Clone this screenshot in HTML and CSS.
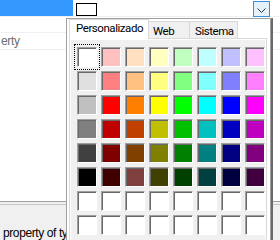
FILE: index.html
```html
<!DOCTYPE html>
<html lang="es">
<head>
    <meta charset="UTF-8">
    <title>Color</title>
    <link rel="stylesheet" href="styles.css">
</head>
<body>
    <div class="grid">
        <div class="row sel">
            <div class="name"></div>
            <div class="value">
                <span class="swatch"></span>
                <span class="drop">
                    <svg width="15" height="14" viewBox="0 0 15 14"><polyline points="3.5,6.5 7.5,10.5 11.5,6.5" fill="none" stroke="#333" stroke-width="1"/></svg>
                </span>
            </div>
        </div>
        <div class="row"><div class="name"></div></div>
        <div class="row"><div class="name dim">erty</div></div>
        <div class="fill"></div>
        <div class="split"></div>
        <div class="desc">property of type Color.</div>
    </div>

    <div class="popup">
        <div class="tabs">
            <div class="tab active">Personalizado</div>
            <div class="tab web">Web</div>
            <div class="tab sys">Sistema</div>
        </div>
        <div class="panel">
            <div class="palette" id="palette"></div>
        </div>
    </div>

    <script>
        const colors = [
            '#ffffff', '#ffc0c0', '#ffe0c0', '#ffffc0', '#c0ffc0', '#c0ffff', '#c0c0ff', '#ffc0ff',
            '#e0e0e0', '#ff8080', '#ffc080', '#ffff80', '#80ff80', '#80ffff', '#8080ff', '#ff80ff',
            '#c0c0c0', '#ff0000', '#ff8000', '#ffff00', '#00ff00', '#00ffff', '#0000ff', '#ff00ff',
            '#808080', '#c00000', '#c04000', '#c0c000', '#00c000', '#00c0c0', '#0000c0', '#c000c0',
            '#404040', '#800000', '#804000', '#808000', '#008000', '#008080', '#000080', '#800080',
            '#000000', '#400000', '#804040', '#404000', '#004000', '#004040', '#000040', '#400040'
        ];
        const palette = document.getElementById('palette');
        for (let i = 0; i < 64; i++) {
            const cell = document.createElement('div');
            cell.className = i === 0 ? 'cell focus' : 'cell';
            cell.style.background = colors[i] || '#ffffff';
            palette.appendChild(cell);
        }
    </script>
</body>
</html>
```

FILE: styles.css
```css
* { margin: 0; padding: 0; box-sizing: border-box; }
body {
    font-family: "Liberation Sans", Arial, sans-serif;
    font-size: 12px;
    color: #000;
    background: #fff;
    width: 280px;
    height: 240px;
    overflow: hidden;
    position: relative;
}
.grid {
    display: flex;
    flex-direction: column;
    height: 240px;
}
.row {
    display: flex;
    height: 17px;
    border-bottom: 1px solid #f0f0f0;
}
.row .name {
    width: 73px;
    line-height: 16px;
    white-space: nowrap;
}
.row .name.dim {
    color: #6d6d6d;
    letter-spacing: -0.3px;
    padding-left: 1px;
}
.row.sel .name {
    background: #3399ff;
}
.row .value {
    flex: 1;
    display: flex;
    align-items: flex-start;
    padding: 3px 0 0 3px;
}
.swatch {
    width: 21px;
    height: 13px;
    border: 1px solid #000;
    background: #fff;
}
.drop {
    margin-left: auto;
    margin-right: 10px;
    margin-top: -2px;
    width: 17px;
    height: 16px;
    border: 1px solid #3c8fdc;
    background: #e5f1fb;
    display: flex;
}
.fill {
    height: 158px;
}
.split {
    height: 4px;
    border-top: 1px solid #a0a0a0;
    border-bottom: 1px solid #c8c8c8;
    background: #f0f0f0;
}
.desc {
    flex: 1;
    background: #f0f0f0;
    padding: 21px 0 0 3px;
    line-height: 14px;
    letter-spacing: -0.4px;
    white-space: nowrap;
}

/* color editor drop-down */
.popup {
    position: absolute;
    left: 66px;
    top: 18px;
    width: 207px;
    height: 230px;
    background: #fff;
    border-left: 1px solid #a0a0a0;
    border-top: 1px solid #a0a0a0;
    border-right: 2px solid #696969;
    box-shadow: inset -1px 0 0 #a0a0a0;
    padding-left: 2px;
}
.tabs {
    display: flex;
    align-items: flex-end;
    height: 20px;
    margin-bottom: -1px;
    position: relative;
    z-index: 1;
}
.tab {
    height: 17px;
    margin-bottom: 1px;
    margin-left: -1px;
    border: 1px solid #d9d9d9;
    border-bottom: none;
    background: #f0f0f0;
    padding: 2px 0 0 4px;
    font-family: Roboto, "Liberation Sans", sans-serif;
    font-size: 11.5px;
    line-height: 14px;
    letter-spacing: -0.45px;
    white-space: nowrap;
}
.tab.active {
    height: 20px;
    width: 80px;
    margin: 0;
    background: #fff;
    padding: 1px 0 0 6px;
    position: relative;
    z-index: 1;
}
.tab.web { width: 42px; }
.tab.sys { width: 49px; padding-left: 5px; }
.panel {
    width: 198px;
    border: 1px solid #d9d9d9;
    background: #fff;
    padding: 1px;
}
.palette {
    background: #f0f0f0;
    padding: 7px 0 10px 6px;
    display: grid;
    grid-template-columns: repeat(8, 20px);
    gap: 4px;
}
.cell {
    width: 20px;
    height: 20px;
    border: 1px solid;
    border-color: #a0a0a0 #fff #fff #a0a0a0;
    box-shadow: inset 1px 1px 0 #696969;
}
.cell.focus {
    outline: 1px dotted #000;
    outline-offset: 2px;
}
```
